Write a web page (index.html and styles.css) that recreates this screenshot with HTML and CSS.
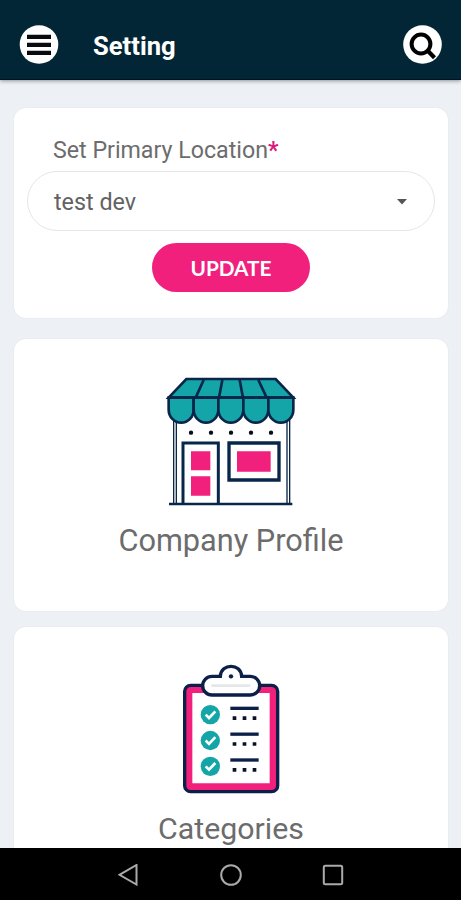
FILE: index.html
```html
<!DOCTYPE html>
<html lang="en">
<head>
<meta charset="utf-8">
<title>Setting</title>
<link rel="stylesheet" href="styles.css">
</head>
<body>
<header class="topbar">
  <button class="round" aria-label="Menu">
    <svg width="40" height="40" viewBox="0 0 40 40"><circle cx="20" cy="20.5" r="19.3" fill="#fff"/><path d="M8 12.8H32M8 20.8H32M8 28.8H32" stroke="#080c0e" stroke-width="4.2"/></svg>
  </button>
  <h1 class="title">Setting</h1>
  <button class="round search" aria-label="Search">
    <svg width="40" height="40" viewBox="0 0 40 40"><circle cx="20.5" cy="20.5" r="19.3" fill="#fff"/><circle cx="19" cy="20" r="9.4" fill="none" stroke="#000" stroke-width="4"/><path d="M25.5 26.5L32.5 33.7" stroke="#000" stroke-width="4.2"/></svg>
  </button>
</header>
<main class="content">
  <section class="card location">
    <div class="label">Set Primary Location<span class="required">*</span></div>
    <div class="select"><span>test dev</span><svg width="10" height="6" viewBox="0 0 10 6"><path d="M0 0H10L5 5.5Z" fill="#555"/></svg></div>
    <button class="update">UPDATE</button>
  </section>
  <section class="card profile">
    <svg class="art" width="150" height="145" viewBox="0 0 450 435">
      <g stroke="#08264a" stroke-width="8" fill="none">
        <path d="M56 150V402M64 150V402M396 150V402M404 150V402" stroke-width="4"/>
        <path d="M42 402H412"/>
        <path d="M84 402V219H190V402" stroke-width="9"/>
        <path d="M222 219H372V330H222Z" stroke-width="10"/>
        <g fill="#14a5a8" stroke-width="8">
          <path d="M94 27H362L415 83H41Z"/>
          <path d="M41 83H116V119A37.5 39 0 0 1 41 119Z"/>
          <path d="M116 83H190V119A37 39 0 0 1 116 119Z"/>
          <path d="M190 83H265V119A37.5 39 0 0 1 190 119Z"/>
          <path d="M265 83H340V119A37.5 39 0 0 1 265 119Z"/>
          <path d="M340 83H415V119A37.5 39 0 0 1 340 119Z"/>
          <path d="M146 30L122 83M202 30L192 83M254 30L264 83M310 30L335 83"/>
        </g>
      </g>
      <g fill="#f0207c"><path d="M108 244H166V301H108ZM108 319H166V377H108ZM246 244H347V305H246Z"/></g>
      <g fill="#06101c"><circle cx="108" cy="188" r="6.5"/><circle cx="168" cy="188" r="6.5"/><circle cx="228" cy="188" r="6.5"/><circle cx="288" cy="188" r="6.5"/><circle cx="348" cy="188" r="6.5"/></g>
    </svg>
    <h2 class="name">Company Profile</h2>
  </section>
  <section class="card categories">
    <svg class="art" width="130" height="145" viewBox="0 0 390 435">
      <rect x="59" y="91" width="279" height="319" rx="18" fill="#f0207c" stroke="#0b1f48" stroke-width="10"/>
      <path d="M82 114H314V385H82Z" fill="#fff"/>
      <path d="M141 64H166C168 24 228 24 230 64H256A28 28 0 0 1 256 120H141A28 28 0 0 1 141 64Z" fill="#fff" stroke="#0b1f48" stroke-width="10"/>
      <path d="M139 92H256" stroke="#e4e8ea" stroke-width="8"/><circle cx="198" cy="64" r="6.5" fill="#0b1f48"/>
      <g id="row"><circle cx="136" cy="179" r="29" fill="#14a5a8"/><path d="M122 179L132 189L151 169" fill="none" stroke="#fff" stroke-width="8"/><path d="M196 160H281" stroke="#0b1f48" stroke-width="10"/><path d="M203 184h11v11h-11zM233 184h11v11h-11zM263 184h11v11h-11z" fill="#081426"/></g>
      <use href="#row" y="77.5"/><use href="#row" y="155"/>
    </svg>
    <h2 class="name">Categories</h2>
  </section>
</main>
<nav class="navbar">
  <svg width="22" height="22" viewBox="0 0 22 22"><path d="M18.5 1V20.5L1.5 10.8Z"/></svg>
  <svg width="22" height="22" viewBox="0 0 22 22"><circle cx="11" cy="11" r="9.8"/></svg>
  <svg width="22" height="22" viewBox="0 0 22 22"><rect x="1.8" y="1.8" width="18.4" height="18.4" rx="1.5"/></svg>
</nav>
</body>
</html>
```
FILE: styles.css
```css
* { box-sizing: border-box; }
body {
  margin: 0;
  height: 900px;
  display: flex;
  flex-direction: column;
  overflow: hidden;
  background: #edf1f5;
  color: #6c6c6c;
  font-family: Roboto, sans-serif;
}
svg { display: block; }
button { border: 0; padding: 0; background: none; }
.topbar {
  flex: none;
  height: 80px;
  padding: 9px 19px 0;
  display: flex;
  align-items: center;
  background: #032636;
  border-bottom: 1px solid #001521;
  box-shadow: 0 1px 4px rgba(0, 0, 0, .4);
}
.round { width: 40px; height: 40px; }
.search { margin-left: auto; }
.title {
  margin: 4px 0 0 34px;
  font-size: 25.6px;
  line-height: 30px;
  font-weight: 700;
  color: #fff;
}
.content {
  flex: 1;
  min-height: 0;
  overflow: hidden;
  padding: 28px 13px 0 14px;
}
.card {
  display: flex;
  flex-direction: column;
  align-items: center;
  background: #fff;
  border-radius: 12px;
  box-shadow: 0 0 2px rgba(0, 0, 0, .07);
}
.location { height: 210px; padding: 27px 13px 0; }
.label {
  align-self: flex-start;
  margin-left: 26px;
  font-size: 23.2px;
  line-height: 30px;
}
.required { color: #d81b78; font-weight: 700; }
.select {
  width: 100%;
  height: 60px;
  margin-top: 6px;
  padding: 1px 27px 0 26px;
  display: flex;
  align-items: center;
  justify-content: space-between;
  border: 1px solid #e4e6e8;
  border-radius: 30px;
  font-size: 23.3px;
  color: #626262;
}
.update {
  width: 158px;
  height: 49px;
  margin-top: 12px;
  border-radius: 25px;
  background: #f0207c;
  color: #fff;
  font: 700 20.8px Lato, sans-serif;
}
.profile { height: 272px; margin-top: 21px; padding-top: 31px; }
.categories { height: 272px; margin-top: 16px; padding-top: 28px; }
.art { margin-right: 2.5px; }
.name {
  margin: 8px 0 0;
  font-size: 30.7px;
  line-height: 36px;
  font-weight: 400;
}
.categories .name { margin-top: 11px; font-size: 30.3px; }
.navbar {
  flex: none;
  height: 52px;
  padding-top: 1px;
  display: flex;
  justify-content: center;
  align-items: center;
  gap: 80px;
  background: #000;
}
.navbar svg { fill: none; stroke: #aaa; stroke-width: 2; }
```
